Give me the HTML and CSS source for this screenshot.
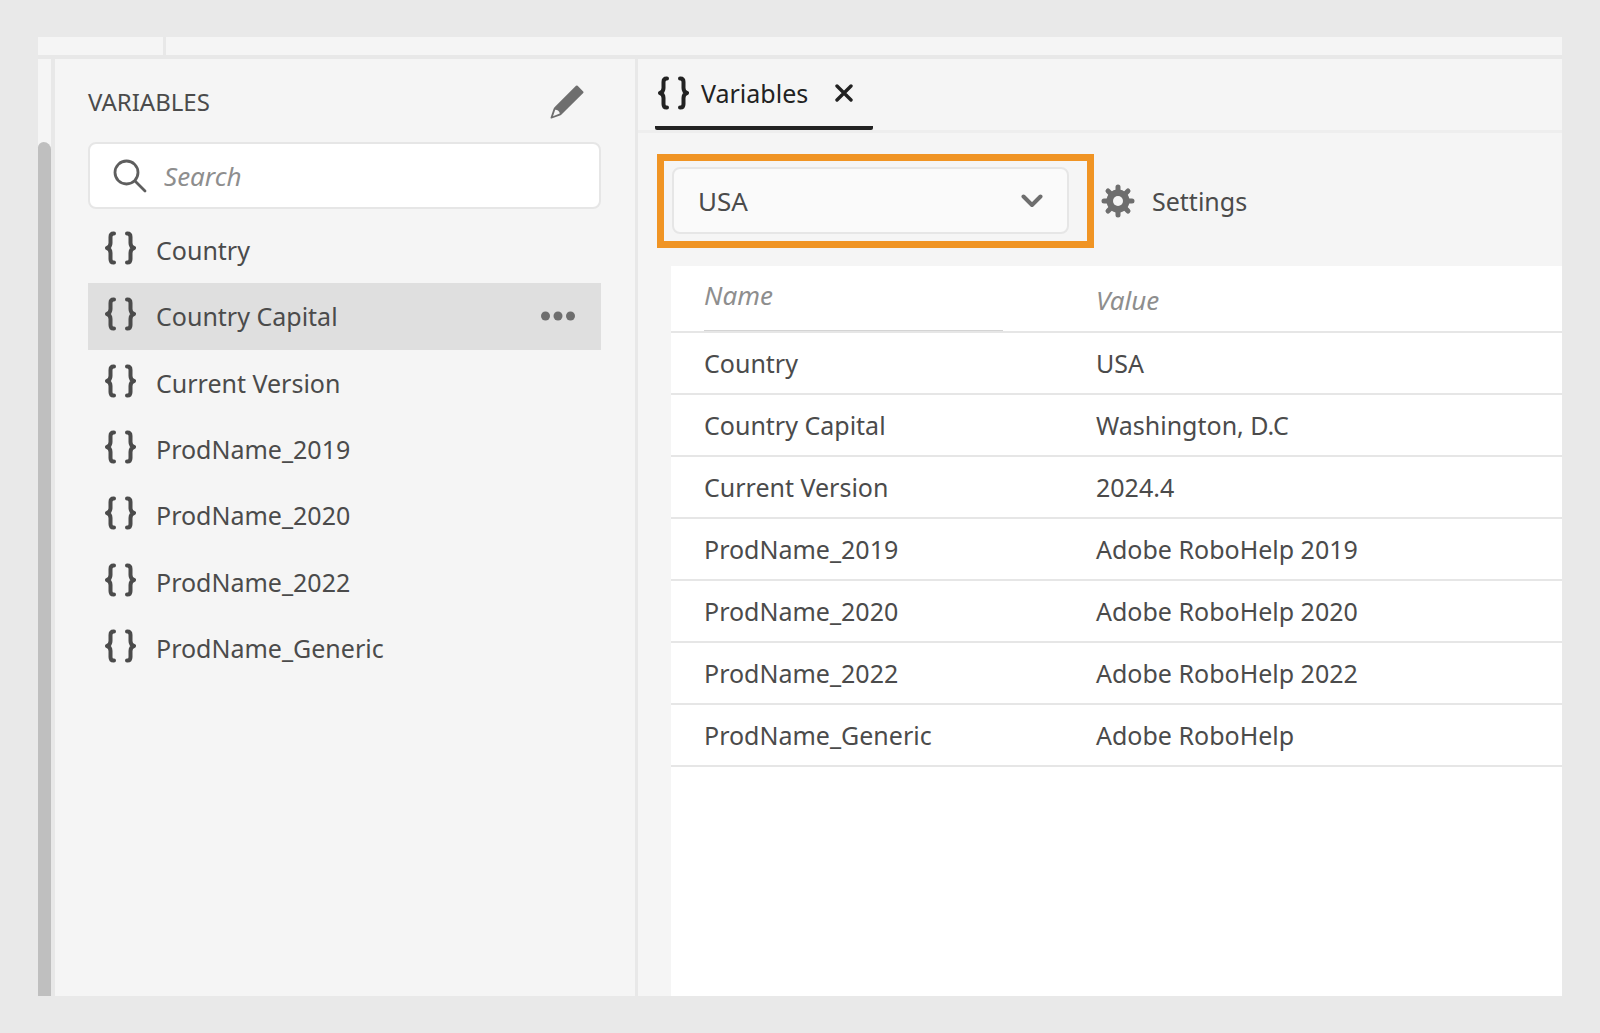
FILE: index.html
```html
<!DOCTYPE html>
<html lang="en">
<head>
<meta charset="utf-8">
<title>Variables</title>
<meta name="viewport" content="width=device-width, initial-scale=1">
<link rel="stylesheet" href="styles.css">
</head>
<body>
<svg class="symbols" aria-hidden="true">
  <symbol id="braces" viewBox="0 0 32 34">
    <path d="M10 2.500H9.500Q6.500 2.500 6.500 6V12Q6.500 16 3 17Q6.500 18 6.500 22V28Q6.500 31.500 9.500 31.500H10M23 2.500H23.500Q26.500 2.500 26.500 6V12Q26.500 16 30 17Q26.500 18 26.500 22V28Q26.500 31.500 23.500 31.500H23" fill="none" stroke="currentColor" stroke-width="4" stroke-linecap="round" stroke-linejoin="round"/>
  </symbol>
</svg>
<div class="app">
  <header class="topbar"><div class="topbar-cell"></div></header>
  <div class="workspace">
    <div class="rail"><div class="rail-thumb"></div></div>
    <aside class="sidebar">
      <div class="sidebar-head">
        <h1 class="sidebar-title">VARIABLES</h1>
        <button class="icon-button" type="button" aria-label="Edit">
          <svg width="34" height="34" viewBox="0 0 34 34"><path fill="#6e6e6e" fill-rule="evenodd" d="M26 .8Q26.800 0 27.600.8L33.200 6.400Q34 7.200 33.200 8L12 29Q11 30 10 30.500L1.500 33.500Q.3 33.800.6 32.500L3.500 24Q4 22.800 5 21.800ZM5.200 24.800L3 31.300L9.800 28.600Q9.800 27 8 25.500Q6.500 24.500 5.200 24.800Z"/></svg>
        </button>
      </div>
      <label class="search">
        <svg width="34" height="34" viewBox="0 0 34 34" aria-hidden="true"><g fill="none" stroke="#5e5e5e" stroke-width="2.800" stroke-linecap="round"><circle cx="13.500" cy="13.500" r="11.500"/><path d="M22 22L32 32"/></g></svg>
        <input class="search-input" type="search" placeholder="Search" aria-label="Search">
      </label>
      <ul class="variables">
        <li class="variable"><svg class="braces"><use href="#braces"/></svg><span>Country</span></li>
        <li class="variable selected"><svg class="braces"><use href="#braces"/></svg><span>Country Capital</span>
          <button class="icon-button more" type="button" aria-label="More options"><svg width="34" height="10" viewBox="0 0 34 10" fill="#6e6e6e"><circle cx="4.500" cy="5" r="4.500"/><circle cx="17" cy="5" r="4.500"/><circle cx="29.500" cy="5" r="4.500"/></svg></button></li>
        <li class="variable"><svg class="braces"><use href="#braces"/></svg><span>Current Version</span></li>
        <li class="variable"><svg class="braces"><use href="#braces"/></svg><span>ProdName_2019</span></li>
        <li class="variable"><svg class="braces"><use href="#braces"/></svg><span>ProdName_2020</span></li>
        <li class="variable"><svg class="braces"><use href="#braces"/></svg><span>ProdName_2022</span></li>
        <li class="variable"><svg class="braces"><use href="#braces"/></svg><span>ProdName_Generic</span></li>
      </ul>
    </aside>
    <main class="editor">
      <div class="tabs">
        <div class="tab">
          <svg class="braces"><use href="#braces"/></svg>
          <span class="tab-name">Variables</span>
          <button class="icon-button" type="button" aria-label="Close tab"><svg width="18" height="18" viewBox="0 0 18 18"><path d="M2 2L16 16M16 2L2 16" stroke="#222" stroke-width="3.400" stroke-linecap="round"/></svg></button>
        </div>
      </div>
      <div class="toolbar">
        <div class="highlight">
          <div class="picker">
            <select class="picker-select" aria-label="Variable set"><option>USA</option></select>
            <svg class="picker-arrow" width="22" height="14" viewBox="0 0 22 14" aria-hidden="true"><path d="M2.500 2.500L11 11L19.500 2.500" fill="none" stroke="#6e6e6e" stroke-width="4" stroke-linecap="round" stroke-linejoin="round"/></svg>
          </div>
        </div>
        <button class="settings" type="button">
          <svg width="34" height="34" viewBox="-17 -17 34 34" aria-hidden="true">
            <g stroke="#6e6e6e" stroke-width="5" stroke-linecap="round"><path d="M0 -14V14M-14 0H14M-10 -10L10 10M10 -10L-10 10"/></g>
            <circle r="11.500" fill="#6e6e6e"/><circle r="5" fill="#f5f5f5"/>
          </svg>
          <span>Settings</span>
        </button>
      </div>
      <div class="sheet">
        <table class="grid">
          <colgroup><col class="col-name"><col></colgroup>
          <thead><tr class="entry">
            <th scope="col"><input class="field field-name" type="text" placeholder="Name" aria-label="Name"></th>
            <th scope="col"><input class="field" type="text" placeholder="Value" aria-label="Value"></th>
          </tr></thead>
          <tbody>
            <tr><td>Country</td><td>USA</td></tr>
            <tr><td>Country Capital</td><td>Washington, D.C</td></tr>
            <tr><td>Current Version</td><td>2024.4</td></tr>
            <tr><td>ProdName_2019</td><td>Adobe RoboHelp 2019</td></tr>
            <tr><td>ProdName_2020</td><td>Adobe RoboHelp 2020</td></tr>
            <tr><td>ProdName_2022</td><td>Adobe RoboHelp 2022</td></tr>
            <tr><td>ProdName_Generic</td><td>Adobe RoboHelp</td></tr>
          </tbody>
        </table>
      </div>
    </main>
  </div>
</div>
</body>
</html>
```
FILE: styles.css
```css
* { box-sizing: border-box; }

body {
  margin: 0;
  background: #e9e9e9;
  color: #4b4b4b;
  font: 25px/32px "Noto Sans", "Open Sans", sans-serif;
}

button, input, select { font: inherit; color: inherit; }

input, select { font-size: 26px; }

.symbols { position: absolute; width: 0; height: 0; }

.app {
  display: flex;
  flex-direction: column;
  min-height: 100vh;
  padding: 37px 38px;
}

.topbar {
  display: flex;
  height: 22px;
  background: #f5f5f5;
  border-bottom: 4px solid #e8e8e8;
}

.topbar-cell { width: 128px; border-right: 3px solid #e8e8e8; }

.workspace { display: flex; flex: 1; background: #f5f5f5; }

.rail {
  display: flex;
  width: 17px;
  padding-top: 83px;
  border-right: 4px solid #e8e8e8;
}

.rail-thumb { flex: 1; background: #bfbfbf; border-radius: 6px 8px 0 0; }

.sidebar {
  flex: 0 0 583px;
  padding: 25px 34px 24px 33px;
  border-right: 3px solid #e8e8e8;
}

.sidebar-head {
  display: flex;
  align-items: center;
  justify-content: space-between;
  height: 36px;
  padding-right: 17px;
  margin-bottom: 22px;
}

.sidebar-title { margin: 0; font-size: 24px; font-weight: 400; }

.icon-button {
  display: flex;
  padding: 0;
  border: 0;
  background: none;
  cursor: pointer;
}

.search {
  display: flex;
  align-items: center;
  gap: 17px;
  height: 67px;
  padding: 0 23px;
  background: #fff;
  border: 2px solid #e6e6e6;
  border-radius: 8px;
}

.search-input {
  flex: 1;
  min-width: 0;
  padding: 0;
  border: 0;
  outline: 0;
  background: none;
}

::placeholder { color: #8e8e8e; opacity: 1; font-style: italic; }

.variables {
  display: grid;
  grid-auto-rows: 1fr;
  height: 464px;
  margin: 8px 0 0;
  padding: 0;
  list-style: none;
}

.variable {
  display: flex;
  align-items: center;
  gap: 20px;
  padding: 0 26px 0 16px;
}

.variable .braces { margin-bottom: 4px; }

.selected { background: #dfdfdf; }

.more { margin-left: auto; }

.braces { width: 32px; height: 34px; flex: none; }

.editor { display: flex; flex: 1; flex-direction: column; min-width: 0; }

.tabs {
  display: flex;
  height: 74px;
  padding-left: 17px;
  border-bottom: 3px solid #eee;
}

.tab {
  display: flex;
  align-items: center;
  width: 218px;
  height: 71px;
  padding: 0 20px 0 2px;
  border-bottom: 4px solid #222;
  border-radius: 2px;
  color: #222;
}

.tab-name { flex: 1; padding-left: 12px; }

.toolbar { display: flex; align-items: center; padding: 21px 0 18px 19px; }

.highlight { padding: 6px 18px 7px 8px; border: 7px solid #f09424; }

.picker { position: relative; width: 397px; }

.picker-select {
  display: block;
  width: 100%;
  height: 67px;
  padding: 0 24px;
  appearance: none;
  border: 2px solid #e6e6e6;
  border-radius: 8px;
  background: #fafafa;
}

.picker-arrow { position: absolute; top: 27px; right: 26px; pointer-events: none; }

.settings {
  display: flex;
  align-items: center;
  gap: 17px;
  padding: 0 7px;
  border: 0;
  background: none;
  cursor: pointer;
}

.sheet { flex: 1; margin-left: 33px; background: #fff; }

.grid { width: 100%; table-layout: fixed; border-collapse: separate; border-spacing: 0; }

.col-name { width: 391px; }

.grid td, .grid th {
  height: 62px;
  padding: 0 0 0 33px;
  border-bottom: 2px solid #e6e6e6;
  text-align: left;
  font-weight: 400;
}

.grid td + td, .grid th + th { padding-left: 34px; }

.grid .entry th { height: 67px; vertical-align: bottom; }

.field {
  display: block;
  width: 299px;
  height: 62px;
  padding: 0;
  border: 0;
  outline: 0;
  background: none;
}

.field-name { padding-bottom: 9px; border-bottom: 1px solid #d4d4d4; }
```
